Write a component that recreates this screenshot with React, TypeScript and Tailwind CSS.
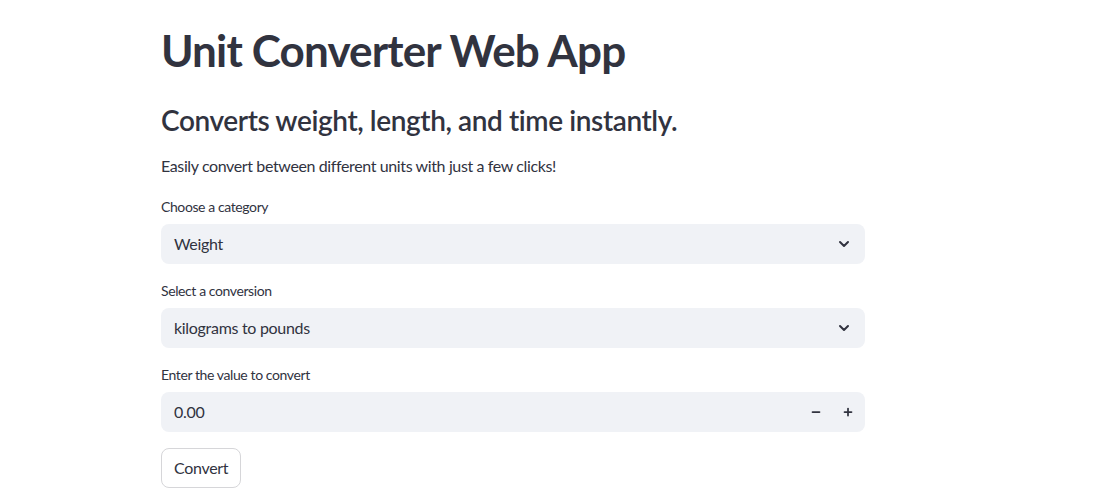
import React, { useState } from "react";
import { ChevronDown, Minus, Plus } from "lucide-react";

const font = { fontFamily: '"Source Sans Pro", Lato, "Noto Sans", sans-serif' };

function Label({ children }: { children: React.ReactNode }) {
  return <div className="h-5 text-sm leading-5 tracking-[-0.4px] text-[#31333f]">{children}</div>;
}

function SelectBox({ value }: { value: string }) {
  return (
    <div className="mt-[7px] flex h-10 items-center justify-between rounded-lg bg-[#f0f2f6] pl-[13px] pr-[13px] text-base tracking-[-0.3px] text-[#31333f]">
      <span>{value}</span>
      <ChevronDown className="h-4 w-4 text-[#31333f]" strokeWidth={3} />
    </div>
  );
}

export default function App() {
  const [value, setValue] = useState(0);

  return (
    <div className="min-h-screen bg-white text-[#31333f]" style={font}>
      <div className="ml-[161px] w-[704px] pt-6">
        {/* Title */}
        <h1 className="text-[44px] font-bold leading-[53px] tracking-[-0.85px]">Unit Converter Web App</h1>
        <h3 className="mt-[26px] text-[28px] font-semibold leading-[34px] tracking-[-0.4px]">
          Converts weight, length, and time instantly.
        </h3>
        <p className="mt-4 text-base leading-[26px] tracking-[-0.38px]">
          Easily convert between different units with just a few clicks!
        </p>

        {/* Category */}
        <div className="mt-[18px]">
          <Label>Choose a category</Label>
          <SelectBox value="Weight" />
        </div>

        {/* Conversion */}
        <div className="mt-[17px]">
          <Label>Select a conversion</Label>
          <SelectBox value="kilograms to pounds" />
        </div>

        {/* Value input */}
        <div className="mt-[17px]">
          <Label>Enter the value to convert</Label>
          <div className="mt-[7px] flex h-10 items-center rounded-lg bg-[#f0f2f6] pl-[13px] pr-px text-base tracking-[-0.3px]">
            <span className="flex-1">{value.toFixed(2)}</span>
            <button
              onClick={() => setValue((v) => v - 1)}
              className="flex h-10 w-8 items-center justify-center"
            >
              <Minus className="h-3 w-3" strokeWidth={3.5} />
            </button>
            <button
              onClick={() => setValue((v) => v + 1)}
              className="flex h-10 w-8 items-center justify-center"
            >
              <Plus className="h-3 w-3" strokeWidth={3.5} />
            </button>
          </div>
        </div>

        <button className="mt-4 h-10 rounded-lg border border-[#d6d6d9] bg-white px-3 text-base tracking-[-0.3px] text-[#31333f]">
          Convert
        </button>
      </div>
    </div>
  );
}
